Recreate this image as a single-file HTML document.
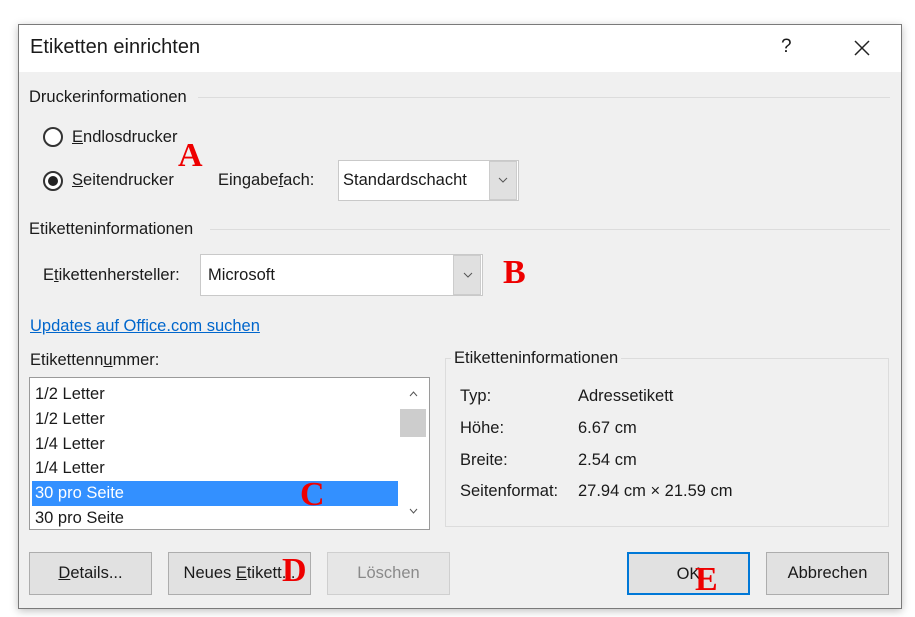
<!DOCTYPE html><html><head><meta charset="utf-8"><style>
*{margin:0;padding:0;box-sizing:border-box}
body{width:915px;height:617px;background:#fff;font-family:"Liberation Sans",sans-serif;font-size:16.5px;color:#1a1a1a;position:relative;overflow:hidden}
.a{position:absolute;white-space:nowrap}
.dlg{position:absolute;left:18px;top:24px;width:884px;height:585px;border:1px solid #7a7a7a;background:#f0f0f0;box-shadow:0 2px 8px rgba(0,0,0,.25)}
.tb{position:absolute;left:0;top:0;width:100%;height:47px;background:#fff}
.ln{position:absolute;height:1px;background:#dcdcdc}
.rad{position:absolute;width:20px;height:20px;border:2px solid #333;border-radius:50%;background:#fff}
.combo{position:absolute;background:#fff;border:1px solid #c9c9c9}
.btn{position:absolute;top:0;bottom:0;width:28px;background:#e0e0e0;border:1px solid #ccc}
.red{position:absolute;color:#e00;font-family:"Liberation Serif",serif;font-weight:bold;font-size:34px}
.pb{position:absolute;top:552px;height:43px;width:123px;background:#e1e1e1;border:1px solid #adadad;text-align:center;line-height:41px}
u{text-decoration:underline}
.li{position:absolute;left:35px;height:25px;line-height:25px}
</style></head><body>
<div class="dlg"><div class="tb"></div></div>
<div class="a" style="left:30px;top:36px;font-size:20px">Etiketten einrichten</div>
<div class="a" style="left:781px;top:36px;font-size:19px">?</div>
<svg class="a" style="left:854px;top:40px" width="16" height="16"><path d="M1 1L15 15M15 1L1 15" stroke="#222" stroke-width="1.5"/></svg>

<div class="a" style="left:29px;top:88px">Druckerinformationen</div>
<div class="ln" style="left:198px;top:97px;width:692px"></div>
<div class="rad" style="left:43px;top:127px"></div>
<div class="a" style="left:72px;top:128px"><u>E</u>ndlosdrucker</div>
<div class="rad" style="left:43px;top:171px"></div>
<div class="a" style="left:48px;top:176px;width:10px;height:10px;border-radius:50%;background:#222"></div>
<div class="a" style="left:72px;top:171px"><u>S</u>eitendrucker</div>
<div class="red" style="left:178px;top:137px">A</div>
<div class="a" style="left:218px;top:171px">Eingabe<u>f</u>ach:</div>
<div class="combo" style="left:338px;top:160px;width:181px;height:41px"><div class="btn" style="right:1px"></div></div>
<div class="a" style="left:343px;top:171px">Standardschacht</div>
<svg class="a" style="left:498px;top:177px" width="10" height="6"><path d="M1 1L5 5L9 1" stroke="#555" fill="none"/></svg>

<div class="a" style="left:29px;top:220px">Etiketteninformationen</div>
<div class="ln" style="left:210px;top:229px;width:680px"></div>
<div class="a" style="left:43px;top:266px">E<u>t</u>ikettenhersteller:</div>
<div class="combo" style="left:200px;top:254px;width:283px;height:42px"><div class="btn" style="right:1px"></div></div>
<div class="a" style="left:208px;top:266px">Microsoft</div>
<svg class="a" style="left:463px;top:272px" width="10" height="6"><path d="M1 1L5 5L9 1" stroke="#555" fill="none"/></svg>
<div class="red" style="left:503px;top:254px">B</div>

<div class="a" style="left:30px;top:317px;color:#0066cc;text-decoration:underline">Updates auf Office.com suchen</div>
<div class="a" style="left:30px;top:351px">Etikettenn<u>u</u>mmer:</div>
<div class="a" style="left:29px;top:377px;width:401px;height:153px;background:#fff;border:1px solid #9a9a9a"></div>
<div class="a" style="left:32px;top:481px;width:366px;height:25px;background:#3390ff"></div>
<div class="li" style="top:382px">1/2 Letter</div>
<div class="li" style="top:407px">1/2 Letter</div>
<div class="li" style="top:432px">1/4 Letter</div>
<div class="li" style="top:456px">1/4 Letter</div>
<div class="li" style="top:481px;color:#fff">30 pro Seite</div>
<div class="li" style="top:506px">30 pro Seite</div>
<div class="red" style="left:300px;top:476px">C</div>
<div class="a" style="left:400px;top:409px;width:26px;height:28px;background:#cdcdcd"></div>
<svg class="a" style="left:409px;top:391px" width="9" height="6"><path d="M1 5L4.5 1L8 5" stroke="#555" fill="none"/></svg>
<svg class="a" style="left:409px;top:508px" width="9" height="6"><path d="M1 1L4.5 5L8 1" stroke="#555" fill="none"/></svg>

<div class="a" style="left:445px;top:358px;width:444px;height:169px;border:1px solid #dcdcdc"></div>
<div class="a" style="left:451px;top:349px;background:#f0f0f0;padding:0 3px">Etiketteninformationen</div>
<div class="a" style="left:460px;top:387px">Typ:</div><div class="a" style="left:578px;top:387px">Adressetikett</div>
<div class="a" style="left:460px;top:419px">Höhe:</div><div class="a" style="left:578px;top:419px">6.67 cm</div>
<div class="a" style="left:460px;top:451px">Breite:</div><div class="a" style="left:578px;top:451px">2.54 cm</div>
<div class="a" style="left:460px;top:482px">Seitenformat:</div><div class="a" style="left:578px;top:482px">27.94 cm × 21.59 cm</div>

<div class="pb" style="left:29px"><u>D</u>etails...</div>
<div class="pb" style="left:168px;width:143px">Neues <u>E</u>tikett...</div>
<div class="pb" style="left:327px;color:#8a8a8a;border-color:#cfcfcf;background:#e6e6e6">Löschen</div>
<div class="pb" style="left:627px;border:2px solid #0078d7">OK</div>
<div class="pb" style="left:766px">Abbrechen</div>
<div class="red" style="left:282px;top:552px">D</div>
<div class="red" style="left:695px;top:561px">E</div>
</body></html>
